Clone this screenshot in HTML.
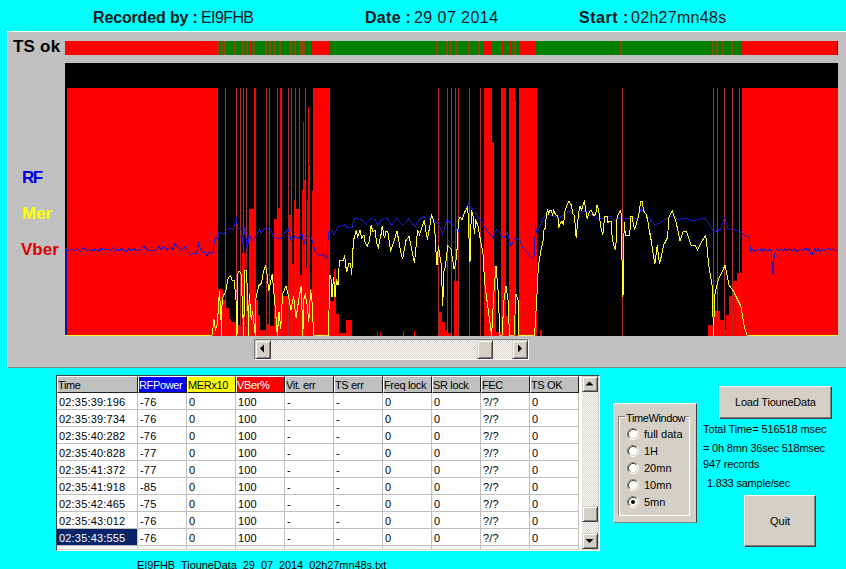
<!DOCTYPE html>
<html><head><meta charset="utf-8">
<style>
*{margin:0;padding:0;box-sizing:border-box}
html,body{width:846px;height:569px;overflow:hidden;background:#00ffff;font-family:"Liberation Sans",sans-serif;position:relative}
.a{position:absolute;white-space:nowrap}
.hb{font-weight:bold;font-size:16px;line-height:16px;color:#101820}
.hn{font-size:16px;line-height:16px;color:#101820}
.lbl{font-weight:bold;font-size:17px;line-height:17px}
.t11{font-size:11px;line-height:11px;color:#000}
.panel{position:absolute;left:7px;top:31px;width:839px;height:337px;background:#c0c0c0;border-top:1px solid #f0ffff;border-left:1px solid #f0ffff;border-bottom:1px solid #7a8a8a}
.btn{position:absolute;background:#d4d0c8;border-top:1px solid #d4d0c8;border-left:1px solid #d4d0c8;border-right:1px solid #404040;border-bottom:1px solid #404040;box-shadow:inset 1px 1px 0 #fff,inset -1px -1px 0 #808080}
.btn2{position:absolute;background:#d4d0c8;border-top:1px solid #fff;border-left:1px solid #fff;border-right:1px solid #404040;border-bottom:1px solid #404040;box-shadow:inset -1px -1px 0 #808080}
.sb{position:absolute;background-color:#fff;background-image:linear-gradient(45deg,#d4d0c8 25%,transparent 25%,transparent 75%,#d4d0c8 75%),linear-gradient(45deg,#d4d0c8 25%,transparent 25%,transparent 75%,#d4d0c8 75%);background-size:2px 2px;background-position:0 0,1px 1px}
.grid{position:absolute;left:56px;top:375px;width:544px;height:176px;background:#fff;border-top:1px solid #404040;border-left:1px solid #404040;border-right:1px solid #fff;border-bottom:1px solid #fff;box-shadow:inset -1px -1px 0 #d4d0c8;overflow:hidden}
.gin{position:absolute;left:0px;top:0px;width:541px;height:173px;overflow:hidden}
.hc{position:absolute;top:0;height:17px;background:#c0c0c0;border-top:1px solid #fff;border-left:1px solid #fff;border-right:1px solid #202020;border-bottom:1px solid #202020;font-size:11px;line-height:17px;padding-left:0px;color:#000;overflow:hidden;letter-spacing:-0.35px}
.row{position:absolute;left:0;height:17px;font-size:11px;line-height:18px;color:#000;letter-spacing:0.18px}
.cell{position:absolute;top:0;height:17px;border-right:1px solid #c0c0c0;border-bottom:1px solid #c0c0c0;padding-left:2px;overflow:hidden}
</style></head><body>
<div class="a hb" style="left:93px;top:10px;letter-spacing:-0.15px">Recorded by :</div>
<div class="a hn" style="left:201px;top:10px;letter-spacing:-0.6px">EI9FHB</div>
<div class="a hb" style="left:365px;top:10px;letter-spacing:0.3px">Date :</div>
<div class="a hn" style="left:414px;top:10px;letter-spacing:0.44px">29 07 2014</div>
<div class="a hb" style="left:579px;top:10px;letter-spacing:0.5px">Start :</div>
<div class="a hn" style="left:631px;top:10px;letter-spacing:0.3px">02h27mn48s</div>

<div class="panel"></div>
<div class="a lbl" style="left:13px;top:38px;color:#000;letter-spacing:0.2px">TS ok</div>
<div class="a lbl" style="left:22px;top:169px;color:#0000e0;letter-spacing:-1.5px">RF</div>
<div class="a lbl" style="left:22px;top:205px;color:#ffff00">Mer</div>
<div class="a lbl" style="left:21px;top:241px;color:#e00000">Vber</div>
<svg width="846" height="569" style="position:absolute;left:0;top:0" shape-rendering="crispEdges">
<rect x="65" y="63" width="773" height="273" fill="#000"/>
<path fill="#f00" d="M67 88H218V336H67ZM218 289H223V336H218ZM223 300H225V336H223ZM226 308H229V336H226ZM229 319H231V336H229ZM231 322H236V336H231ZM237 325H240V336H237ZM241 326H242V336H241ZM242 253H243V336H242ZM244 253H245V336H244ZM245 326H246V336H245ZM247 300H249V336H247ZM249 209H254V336H249ZM254 88H256V336H254ZM256 300H258V336H256ZM258 315H260V336H258ZM260 330H266V336H260ZM267 324H269V336H267ZM270 326H274V336H270ZM274 219H277V336H274ZM278 208H280V336H278ZM280 88H282V336H280ZM282 296H288V336H282ZM289 215H291V336H289ZM292 264H294V336H292ZM294 200H295V336H294ZM296 209H299V336H296ZM300 275H302V336H300ZM302 190H303V336H302ZM303 122H304V336H303ZM304 180H305V336H304ZM306 268H307V336H306ZM307 200H308V336H307ZM308 107H309V336H308ZM309 165H310V336H309ZM310 289H312V336H310ZM312 191H313V336H312ZM313 88H330V336H313ZM330 301H334V336H330ZM334 269H336V336H334ZM336 314H339V336H336ZM339 333H346V336H339ZM346 320H352V336H346ZM377 331H378V336H377ZM380 332H381V336H380ZM403 331H404V336H403ZM414 331H415V336H414ZM439 312H442V336H439ZM442 322H445V336H442ZM445 330H447V336H445ZM448 333H451V336H448ZM454 281H455V336H454ZM456 281H458V336H456ZM484 88H492V336H484ZM492 142H494V336H492ZM494 266H496V336H494ZM496 332H501V336H496ZM501 88H506V336H501ZM506 316H509V336H506ZM509 88H515V336H509ZM515 100H516V336H515ZM516 335H519V336H516ZM519 88H537V336H519ZM540 330H542V336H540ZM708 325H713V336H708ZM714 311H717V336H714ZM718 311H720V336H718ZM720 320H724V336H720ZM725 329H726V336H725ZM726 315H729V336H726ZM729 296H732V336H729ZM733 281H737V336H733ZM737 273H739V336H737ZM740 273H742V336H740ZM742 88H838V336H742Z"/>
<path fill="#b02c2c" d="M225 88H226V336H225ZM236 88H237V336H236ZM240 88H241V336H240ZM243 88H244V336H243ZM246 88H247V336H246ZM266 88H267V336H266ZM269 88H270V336H269ZM277 88H278V336H277ZM288 88H289V336H288ZM291 88H292V336H291ZM295 88H296V336H295ZM299 88H300V336H299ZM305 88H306V336H305ZM438 88H439V336H438ZM447 88H448V336H447ZM451 88H452V336H451ZM455 88H456V336H455ZM458 88H459V336H458ZM469 88H470V336H469ZM480 88H481V336H480ZM622 88H623V336H622ZM713 88H714V336H713ZM717 88H718V336H717ZM724 88H725V336H724ZM732 88H733V336H732ZM739 88H740V336H739Z"/>
<rect x="65" y="250" width="2" height="86" fill="#10109a"/>
</svg>
<svg width="846" height="569" style="position:absolute;left:0;top:0">
<polyline fill="none" stroke="#2018c8" stroke-width="1" shape-rendering="crispEdges" points="65.5,250.0 66.0,248.5 68.0,250.5 69.5,250.5 72.0,249.0 74.0,251.0 77.0,248.0 80.0,251.0 81.5,251.0 83.0,248.5 84.5,248.0 86.5,250.5 88.0,249.0 90.0,251.0 92.0,249.0 93.5,251.0 95.5,249.0 98.5,251.0 101.5,248.0 103.5,250.5 105.0,249.0 108.0,249.0 111.0,250.5 112.5,248.0 115.0,251.0 118.0,249.0 119.5,251.0 122.0,248.5 125.0,251.0 126.5,251.0 129.5,248.0 131.0,251.0 134.0,248.5 136.5,251.0 140.0,250.3 143.8,246.5 147.6,250.3 156.0,250.3 159.0,246.5 161.0,250.0 163.6,246.5 167.4,250.0 171.2,247.4 173.0,250.0 175.0,243.6 180.7,250.3 184.4,246.5 188.2,252.0 191.0,255.0 193.0,253.0 196.7,253.0 198.6,243.6 202.4,253.0 204.3,252.0 207.1,256.0 209.0,252.6 212.8,252.6 214.7,239.0 218.5,237.0 218.8,232.0 223.7,234.0 228.5,228.2 233.3,229.2 236.7,216.6 237.2,228.2 241.0,229.2 243.0,243.6 244.9,227.2 247.3,251.4 248.8,235.9 252.6,240.7 256.5,235.9 259.4,229.2 261.3,233.0 265.2,228.2 270.0,229.3 273.9,237.0 279.7,239.0 284.5,233.2 288.4,229.3 291.3,241.0 295.1,236.0 298.0,239.0 301.9,233.2 303.8,244.8 306.7,237.0 310.6,235.1 312.5,241.0 315.4,252.5 320.2,255.4 323.1,254.4 327.0,258.3 328.5,232.2 330.3,229.5 330.8,228.7 334.0,235.0 337.9,227.1 344.2,224.8 347.4,227.9 352.1,227.1 353.7,219.2 356.9,218.4 361.6,220.0 366.4,224.0 371.1,218.4 375.8,220.0 377.4,225.6 381.4,220.0 383.8,218.4 388.0,219.2 391.2,225.3 396.7,219.0 403.0,225.3 408.6,219.0 414.9,226.9 419.6,219.0 424.4,216.6 427.5,220.6 431.5,215.8 435.4,222.1 438.6,223.7 442.7,235.0 446.8,219.6 451.0,223.3 456.0,228.2 458.0,232.0 459.5,218.0 463.0,215.0 468.3,203.6 476.9,214.7 481.8,222.0 486.7,230.7 493.2,237.5 496.4,229.6 501.1,234.4 503.5,238.0 507.5,232.8 511.0,246.0 515.4,237.5 520.0,241.0 523.0,248.0 527.0,252.0 530.0,256.0 533.0,259.0 534.5,255.0 535.4,223.0 536.6,232.0 539.7,226.6 542.9,219.5 546.0,214.0 552.4,215.6 558.7,218.0 561.9,216.3 566.6,212.4 570.6,210.8 574.5,215.6 577.7,220.3 580.8,212.4 585.6,210.8 590.3,213.2 595.0,218.0 601.3,218.7 610.8,216.3 614.8,221.0 618.7,218.7 623.5,218.7 630.6,218.0 636.9,218.0 641.6,208.4 645.6,214.0 650.3,219.5 654.8,224.8 659.6,223.2 664.3,220.0 672.2,216.0 678.5,219.3 686.5,218.5 692.8,220.9 700.7,218.5 704.7,218.0 708.0,222.7 714.2,232.2 720.6,229.0 724.5,218.0 728.5,229.0 739.6,230.6 744.3,235.4 749.0,237.0 750.6,251.2 752.0,249.0 755.0,251.5 757.0,249.0 760.0,250.5 761.5,248.5 763.0,251.5 764.5,249.0 767.5,251.5 769.5,249.0 771.0,250.5 773.0,274.0 773.0,263.9 775.5,250.5 777.5,249.0 779.0,251.0 781.5,249.0 783.0,251.0 785.0,248.5 786.5,250.5 789.5,249.0 792.5,250.5 794.0,248.5 797.0,251.5 800.0,249.0 802.0,251.0 804.5,249.0 806.0,248.5 808.0,250.5 809.5,249.0 811.5,255.6 814.5,249.0 816.5,251.0 818.0,248.5 819.5,251.5 822.0,250.5 824.0,249.0 825.5,250.5 827.5,248.5 830.0,249.0 831.5,250.5 833.5,249.0 836.0,250.5 838.0,250.0"/>
<polyline fill="none" stroke="#ffff30" stroke-width="1" shape-rendering="crispEdges" points="65.0,335.5 212.0,335.5 212.7,330.4 214.0,319.5 215.4,330.4 217.4,323.6 219.4,291.0 220.8,314.0 221.5,335.5 222.1,300.6 223.5,295.0 225.5,292.5 228.2,277.6 230.3,275.6 232.3,280.3 234.3,280.3 236.0,300.0 237.0,335.5 237.7,273.5 239.0,270.8 241.0,273.5 242.4,304.7 243.8,335.5 244.5,270.8 246.5,270.8 247.9,304.7 248.5,335.5 249.2,293.8 251.2,319.5 252.6,311.4 255.3,335.5 256.0,297.9 258.7,285.7 261.4,283.0 263.4,272.2 265.5,265.4 267.0,274.0 268.8,291.0 272.2,274.0 275.6,311.6 277.3,335.5 279.0,311.6 280.8,328.6 282.5,294.5 285.9,286.0 288.4,296.0 291.0,310.0 293.5,296.0 296.1,318.0 298.7,299.7 301.2,286.0 302.9,335.5 303.5,300.0 305.3,294.7 307.0,304.0 308.8,321.8 310.6,290.0 312.4,305.3 313.5,335.5 328.8,335.5 329.3,275.0 330.8,275.0 332.0,296.8 333.6,276.6 335.0,296.8 336.5,279.5 338.0,285.3 339.4,260.8 343.7,260.8 344.5,255.0 346.6,272.3 348.8,263.6 350.6,264.0 351.7,275.0 352.9,250.0 353.7,239.8 356.1,230.3 357.7,236.6 360.0,230.3 361.6,238.2 364.0,235.0 365.2,243.0 367.2,246.1 369.5,240.6 371.1,225.6 373.1,231.9 375.0,230.3 376.6,243.0 378.2,247.7 381.4,232.7 382.2,225.6 384.5,238.2 386.1,231.1 387.8,232.0 390.6,250.5 393.4,243.4 397.0,230.8 400.5,250.5 402.6,259.0 406.0,240.6 409.0,236.4 411.7,249.0 414.5,263.0 417.6,230.0 419.6,234.8 422.4,225.3 424.4,219.8 425.9,231.6 427.5,239.5 429.9,225.3 431.5,215.0 433.5,219.8 434.6,226.1 435.6,246.0 437.0,265.0 438.4,246.0 441.3,265.0 442.7,305.5 444.0,271.0 445.5,266.0 447.6,246.0 451.0,249.0 454.0,268.8 455.3,265.0 456.7,256.0 458.5,219.6 460.3,217.1 462.1,219.6 464.6,212.2 466.4,209.8 467.7,206.0 468.9,231.9 469.5,261.0 470.0,261.0 471.4,209.8 473.2,217.1 474.4,234.4 475.7,220.8 478.1,225.8 479.4,234.4 481.8,246.7 483.0,254.0 484.6,282.0 491.6,335.5 494.0,291.0 496.0,266.0 498.0,290.0 500.0,335.5 502.0,335.5 504.0,300.0 506.0,286.0 508.0,300.0 509.5,335.5 514.0,335.5 516.0,294.0 518.0,300.0 519.0,335.5 534.6,335.5 536.9,296.0 538.4,265.3 541.0,250.0 543.3,240.0 543.7,230.6 545.3,228.2 546.5,213.2 547.6,210.0 548.8,214.0 549.6,210.8 551.5,210.8 552.4,214.8 553.6,210.8 555.6,214.8 557.9,216.3 558.7,228.2 560.3,223.5 561.9,221.0 563.5,225.0 565.0,210.8 566.6,206.0 569.0,201.3 571.4,205.3 573.0,214.0 574.5,215.6 576.1,237.7 578.5,214.0 580.0,206.0 581.6,210.0 583.2,204.5 584.4,200.5 585.6,210.0 587.2,218.7 589.5,211.6 591.1,210.0 593.5,215.6 595.8,214.0 597.0,205.3 598.6,209.2 599.7,218.7 601.3,230.6 602.9,234.5 603.7,225.0 604.9,216.3 607.0,216.3 608.0,222.7 609.6,221.0 611.0,221.0 612.4,240.0 615.2,250.0 616.3,240.0 617.1,216.3 620.3,210.8 621.5,214.0 622.4,296.0 623.0,296.0 624.2,221.9 625.4,235.3 629.8,235.3 630.6,216.3 632.0,216.3 634.5,229.8 638.5,216.3 640.8,201.3 642.0,201.3 643.6,210.8 646.4,214.8 648.0,221.9 649.5,233.0 651.1,240.0 650.0,232.7 654.8,264.4 657.2,245.4 659.6,264.4 663.5,245.4 667.5,237.5 669.0,217.0 672.2,210.6 676.0,221.6 680.0,240.6 683.3,231.0 686.5,231.0 691.2,245.4 695.2,245.4 697.5,250.0 702.3,240.6 705.4,236.0 706.3,238.5 708.6,264.4 712.0,285.0 713.6,335.5 714.5,296.0 718.0,280.6 725.0,265.3 729.0,285.0 733.5,291.3 741.0,306.6 744.2,326.5 747.3,335.5 838.0,335.5"/>
</svg>
<svg width="846" height="569" style="position:absolute;left:0;top:0" shape-rendering="crispEdges">
<rect x="65" y="41" width="773" height="14" fill="#008000"/>
<path fill="#f00" d="M65 41H217V55H65ZM250 41H252V55H250ZM311.5 41H329V55H311.5ZM483 41H491V55H483ZM502 41H504V55H502ZM509 41H511V55H509ZM518.5 41H536V55H518.5ZM742 41H838V55H742Z"/>
<path fill="#8a4a08" d="M217 41H219V55H217ZM221 41H223V55H221ZM224 41H226V55H224ZM234 41H236V55H234ZM242 41H244V55H242ZM246 41H248V55H246ZM253 41H255V55H253ZM265 41H267V55H265ZM269 41H271V55H269ZM274 41H276V55H274ZM279 41H281V55H279ZM290 41H292V55H290ZM294 41H296V55H294ZM299 41H301V55H299ZM301 41H303V55H301ZM303 41H305V55H303ZM436 41H438V55H436ZM446 41H448V55H446ZM450 41H452V55H450ZM455 41H457V55H455ZM456 41H458V55H456ZM468 41H470V55H468ZM478 41H480V55H478ZM514 41H516V55H514ZM620 41H622V55H620ZM712 41H714V55H712ZM716 41H718V55H716ZM722 41H724V55H722ZM731 41H733V55H731Z"/>
<rect x="837" y="41" width="1" height="14" fill="#200"/>
</svg>

<!-- chart scrollbar -->
<div class="a" style="left:254px;top:339px;width:275px;height:21px;border-top:1px solid #808080;border-left:1px solid #808080;border-right:1px solid #fff;border-bottom:1px solid #fff"></div>
<div class="sb" style="left:255px;top:340px;width:273px;height:19px"></div>
<div class="btn" style="left:255px;top:340px;width:16px;height:19px"></div>
<div class="btn" style="left:477px;top:340px;width:16px;height:19px"></div>
<div class="btn" style="left:512px;top:340px;width:16px;height:19px"></div>
<svg class="a" style="left:255px;top:340px" width="273" height="19"><path d="M5 8.5L9 4.5V12.5Z" fill="#000"/><path d="M267 8.5L263 4.5V12.5Z" fill="#000"/></svg>

<!-- table -->
<div class="grid"><div class="gin">
<div class="hc" style="left:0px;width:81px;">Time</div>
<div class="hc" style="left:81px;width:49px;background:#0000ff;color:#fff">RFPower</div>
<div class="hc" style="left:130px;width:49px;background:#ffff00;color:#000">MERx10</div>
<div class="hc" style="left:179px;width:49px;background:#ff0000;color:#fff">VBer%</div>
<div class="hc" style="left:228px;width:49px;">Vit. err</div>
<div class="hc" style="left:277px;width:49px;">TS err</div>
<div class="hc" style="left:326px;width:49px;">Freq lock</div>
<div class="hc" style="left:375px;width:49px;">SR lock</div>
<div class="hc" style="left:424px;width:49px;">FEC</div>
<div class="hc" style="left:473px;width:49px;">TS OK</div>
<div class="row" style="top:17px;width:523px">
<div class="cell" style="left:0px;width:81px;">02:35:39:196</div>
<div class="cell" style="left:81px;width:49px;">-76</div>
<div class="cell" style="left:130px;width:49px;">0</div>
<div class="cell" style="left:179px;width:49px;">100</div>
<div class="cell" style="left:228px;width:49px;">-</div>
<div class="cell" style="left:277px;width:49px;">-</div>
<div class="cell" style="left:326px;width:49px;">0</div>
<div class="cell" style="left:375px;width:49px;">0</div>
<div class="cell" style="left:424px;width:49px;">?/?</div>
<div class="cell" style="left:473px;width:49px;">0</div>
</div>
<div class="row" style="top:34px;width:523px">
<div class="cell" style="left:0px;width:81px;">02:35:39:734</div>
<div class="cell" style="left:81px;width:49px;">-76</div>
<div class="cell" style="left:130px;width:49px;">0</div>
<div class="cell" style="left:179px;width:49px;">100</div>
<div class="cell" style="left:228px;width:49px;">-</div>
<div class="cell" style="left:277px;width:49px;">-</div>
<div class="cell" style="left:326px;width:49px;">0</div>
<div class="cell" style="left:375px;width:49px;">0</div>
<div class="cell" style="left:424px;width:49px;">?/?</div>
<div class="cell" style="left:473px;width:49px;">0</div>
</div>
<div class="row" style="top:51px;width:523px">
<div class="cell" style="left:0px;width:81px;">02:35:40:282</div>
<div class="cell" style="left:81px;width:49px;">-76</div>
<div class="cell" style="left:130px;width:49px;">0</div>
<div class="cell" style="left:179px;width:49px;">100</div>
<div class="cell" style="left:228px;width:49px;">-</div>
<div class="cell" style="left:277px;width:49px;">-</div>
<div class="cell" style="left:326px;width:49px;">0</div>
<div class="cell" style="left:375px;width:49px;">0</div>
<div class="cell" style="left:424px;width:49px;">?/?</div>
<div class="cell" style="left:473px;width:49px;">0</div>
</div>
<div class="row" style="top:68px;width:523px">
<div class="cell" style="left:0px;width:81px;">02:35:40:828</div>
<div class="cell" style="left:81px;width:49px;">-77</div>
<div class="cell" style="left:130px;width:49px;">0</div>
<div class="cell" style="left:179px;width:49px;">100</div>
<div class="cell" style="left:228px;width:49px;">-</div>
<div class="cell" style="left:277px;width:49px;">-</div>
<div class="cell" style="left:326px;width:49px;">0</div>
<div class="cell" style="left:375px;width:49px;">0</div>
<div class="cell" style="left:424px;width:49px;">?/?</div>
<div class="cell" style="left:473px;width:49px;">0</div>
</div>
<div class="row" style="top:85px;width:523px">
<div class="cell" style="left:0px;width:81px;">02:35:41:372</div>
<div class="cell" style="left:81px;width:49px;">-77</div>
<div class="cell" style="left:130px;width:49px;">0</div>
<div class="cell" style="left:179px;width:49px;">100</div>
<div class="cell" style="left:228px;width:49px;">-</div>
<div class="cell" style="left:277px;width:49px;">-</div>
<div class="cell" style="left:326px;width:49px;">0</div>
<div class="cell" style="left:375px;width:49px;">0</div>
<div class="cell" style="left:424px;width:49px;">?/?</div>
<div class="cell" style="left:473px;width:49px;">0</div>
</div>
<div class="row" style="top:102px;width:523px">
<div class="cell" style="left:0px;width:81px;">02:35:41:918</div>
<div class="cell" style="left:81px;width:49px;">-85</div>
<div class="cell" style="left:130px;width:49px;">0</div>
<div class="cell" style="left:179px;width:49px;">100</div>
<div class="cell" style="left:228px;width:49px;">-</div>
<div class="cell" style="left:277px;width:49px;">-</div>
<div class="cell" style="left:326px;width:49px;">0</div>
<div class="cell" style="left:375px;width:49px;">0</div>
<div class="cell" style="left:424px;width:49px;">?/?</div>
<div class="cell" style="left:473px;width:49px;">0</div>
</div>
<div class="row" style="top:119px;width:523px">
<div class="cell" style="left:0px;width:81px;">02:35:42:465</div>
<div class="cell" style="left:81px;width:49px;">-75</div>
<div class="cell" style="left:130px;width:49px;">0</div>
<div class="cell" style="left:179px;width:49px;">100</div>
<div class="cell" style="left:228px;width:49px;">-</div>
<div class="cell" style="left:277px;width:49px;">-</div>
<div class="cell" style="left:326px;width:49px;">0</div>
<div class="cell" style="left:375px;width:49px;">0</div>
<div class="cell" style="left:424px;width:49px;">?/?</div>
<div class="cell" style="left:473px;width:49px;">0</div>
</div>
<div class="row" style="top:136px;width:523px">
<div class="cell" style="left:0px;width:81px;">02:35:43:012</div>
<div class="cell" style="left:81px;width:49px;">-76</div>
<div class="cell" style="left:130px;width:49px;">0</div>
<div class="cell" style="left:179px;width:49px;">100</div>
<div class="cell" style="left:228px;width:49px;">-</div>
<div class="cell" style="left:277px;width:49px;">-</div>
<div class="cell" style="left:326px;width:49px;">0</div>
<div class="cell" style="left:375px;width:49px;">0</div>
<div class="cell" style="left:424px;width:49px;">?/?</div>
<div class="cell" style="left:473px;width:49px;">0</div>
</div>
<div class="row" style="top:153px;width:523px">
<div class="cell" style="left:0px;width:81px;background:#0a246a;color:#fff;">02:35:43:555</div>
<div class="cell" style="left:81px;width:49px;">-76</div>
<div class="cell" style="left:130px;width:49px;">0</div>
<div class="cell" style="left:179px;width:49px;">100</div>
<div class="cell" style="left:228px;width:49px;">-</div>
<div class="cell" style="left:277px;width:49px;">-</div>
<div class="cell" style="left:326px;width:49px;">0</div>
<div class="cell" style="left:375px;width:49px;">0</div>
<div class="cell" style="left:424px;width:49px;">?/?</div>
<div class="cell" style="left:473px;width:49px;">0</div>
</div>
<div class="row" style="top:170px;width:523px">
<div class="cell" style="left:0px;width:81px;"></div>
<div class="cell" style="left:81px;width:49px;"></div>
<div class="cell" style="left:130px;width:49px;"></div>
<div class="cell" style="left:179px;width:49px;"></div>
<div class="cell" style="left:228px;width:49px;"></div>
<div class="cell" style="left:277px;width:49px;"></div>
<div class="cell" style="left:326px;width:49px;"></div>
<div class="cell" style="left:375px;width:49px;"></div>
<div class="cell" style="left:424px;width:49px;"></div>
<div class="cell" style="left:473px;width:49px;"></div>
</div>
<div class="sb" style="left:525px;top:0;width:16px;height:173px"></div>
<div class="btn" style="left:525px;top:0px;width:16px;height:16px"></div>
<div class="btn" style="left:525px;top:130px;width:16px;height:16px"></div>
<div class="btn" style="left:525px;top:157px;width:16px;height:16px"></div>
<svg style="position:absolute;left:525px;top:0" width="16" height="173"><path d="M7.5 5.5L3.5 9.5H11.5Z" fill="#000"/><path d="M7.5 167L3.5 163H11.5Z" fill="#000"/></svg>
</div></div>

<!-- time window -->
<div class="a" style="left:613px;top:403px;width:84px;height:120px;background:#d4d0c8;border-top:1px solid #fff;border-left:1px solid #fff;border-right:1px solid #404040;border-bottom:1px solid #808080"></div>
<div class="a" style="left:618px;top:416px;width:72px;height:100px;border-top:1px solid #808080;border-left:1px solid #808080;border-right:1px solid #fff;border-bottom:1px solid #fff;box-shadow:inset 1px 1px 0 #fff,1px 1px 0 #808080 inset"></div>
<div class="a t11" style="left:625px;top:413px;background:#d4d0c8;padding:0 1px;letter-spacing:-0.4px">TimeWindow</div>
<svg class="a" style="left:627px;top:428px" width="12" height="12"><circle cx="6" cy="6" r="5" fill="#fff"/><path d="M2.11 9.89A5.5 5.5 0 0 1 9.89 2.11" stroke="#808080" stroke-width="1" fill="none"/><path d="M9.89 2.11A5.5 5.5 0 0 1 2.11 9.89" stroke="#fff" stroke-width="1" fill="none"/><path d="M2.82 9.18A4.5 4.5 0 0 1 9.18 2.82" stroke="#404040" stroke-width="1" fill="none"/><path d="M9.18 2.82A4.5 4.5 0 0 1 2.82 9.18" stroke="#d4d0c8" stroke-width="1" fill="none"/></svg>
<div class="a t11" style="left:644px;top:429px">full data</div>
<svg class="a" style="left:627px;top:445px" width="12" height="12"><circle cx="6" cy="6" r="5" fill="#fff"/><path d="M2.11 9.89A5.5 5.5 0 0 1 9.89 2.11" stroke="#808080" stroke-width="1" fill="none"/><path d="M9.89 2.11A5.5 5.5 0 0 1 2.11 9.89" stroke="#fff" stroke-width="1" fill="none"/><path d="M2.82 9.18A4.5 4.5 0 0 1 9.18 2.82" stroke="#404040" stroke-width="1" fill="none"/><path d="M9.18 2.82A4.5 4.5 0 0 1 2.82 9.18" stroke="#d4d0c8" stroke-width="1" fill="none"/></svg>
<div class="a t11" style="left:644px;top:446px">1H</div>
<svg class="a" style="left:627px;top:462px" width="12" height="12"><circle cx="6" cy="6" r="5" fill="#fff"/><path d="M2.11 9.89A5.5 5.5 0 0 1 9.89 2.11" stroke="#808080" stroke-width="1" fill="none"/><path d="M9.89 2.11A5.5 5.5 0 0 1 2.11 9.89" stroke="#fff" stroke-width="1" fill="none"/><path d="M2.82 9.18A4.5 4.5 0 0 1 9.18 2.82" stroke="#404040" stroke-width="1" fill="none"/><path d="M9.18 2.82A4.5 4.5 0 0 1 2.82 9.18" stroke="#d4d0c8" stroke-width="1" fill="none"/></svg>
<div class="a t11" style="left:644px;top:463px">20mn</div>
<svg class="a" style="left:627px;top:479px" width="12" height="12"><circle cx="6" cy="6" r="5" fill="#fff"/><path d="M2.11 9.89A5.5 5.5 0 0 1 9.89 2.11" stroke="#808080" stroke-width="1" fill="none"/><path d="M9.89 2.11A5.5 5.5 0 0 1 2.11 9.89" stroke="#fff" stroke-width="1" fill="none"/><path d="M2.82 9.18A4.5 4.5 0 0 1 9.18 2.82" stroke="#404040" stroke-width="1" fill="none"/><path d="M9.18 2.82A4.5 4.5 0 0 1 2.82 9.18" stroke="#d4d0c8" stroke-width="1" fill="none"/></svg>
<div class="a t11" style="left:644px;top:480px">10mn</div>
<svg class="a" style="left:627px;top:496px" width="12" height="12"><circle cx="6" cy="6" r="5" fill="#fff"/><path d="M2.11 9.89A5.5 5.5 0 0 1 9.89 2.11" stroke="#808080" stroke-width="1" fill="none"/><path d="M9.89 2.11A5.5 5.5 0 0 1 2.11 9.89" stroke="#fff" stroke-width="1" fill="none"/><path d="M2.82 9.18A4.5 4.5 0 0 1 9.18 2.82" stroke="#404040" stroke-width="1" fill="none"/><path d="M9.18 2.82A4.5 4.5 0 0 1 2.82 9.18" stroke="#d4d0c8" stroke-width="1" fill="none"/><circle cx="6" cy="6" r="2" fill="#000"/></svg>
<div class="a t11" style="left:644px;top:497px">5mn</div>

<div class="btn2" style="left:719px;top:386px;width:113px;height:33px"></div>
<div class="a t11" style="left:735px;top:397px;letter-spacing:-0.2px">Load TiouneData</div>
<div class="a t11" style="left:703px;top:424px;letter-spacing:-0.1px">Total Time= 516518 msec</div>
<div class="a t11" style="left:703px;top:443px;letter-spacing:-0.2px">= 0h 8mn 36sec 518msec</div>
<div class="a t11" style="left:703px;top:459px;letter-spacing:-0.17px">947 records</div>
<div class="a t11" style="left:707px;top:478px;letter-spacing:-0.2px">1.833 sample/sec</div>
<div class="btn2" style="left:744px;top:495px;width:72px;height:52px"></div>
<div class="a t11" style="left:770px;top:516px">Quit</div>
<div class="a t11" style="left:137px;top:560px;letter-spacing:-0.08px">EI9FHB_TiouneData_29_07_2014_02h27mn48s.txt</div>
</body></html>
